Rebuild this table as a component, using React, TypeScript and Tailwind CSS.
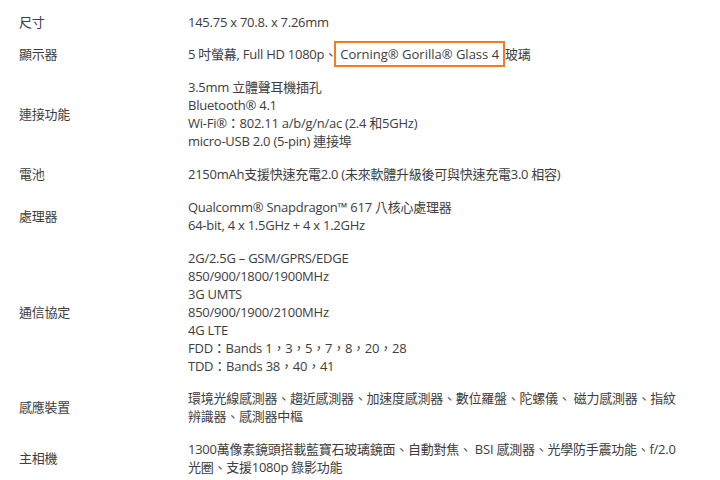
import React from "react";

const rows: { label: string; lines: React.ReactNode[] }[] = [
  { label: "尺寸", lines: ["145.75 x 70.8. x 7.26mm"] },
  {
    label: "顯示器",
    lines: [
      <>
        5 吋螢幕, Full HD 1080p<span className="inline-block w-[10px]">、</span>
        <span className="border-2 border-[#f47b20] px-[4px] py-[2px] tracking-normal">Corning® Gorilla® Glass 4</span>
        玻璃
      </>,
    ],
  },
  {
    label: "連接功能",
    lines: [
      "3.5mm 立體聲耳機插孔",
      "Bluetooth® 4.1",
      "Wi-Fi®：802.11 a/b/g/n/ac (2.4 和5GHz)",
      "micro-USB 2.0 (5-pin) 連接埠",
    ],
  },
  { label: "電池", lines: ["2150mAh支援快速充電2.0 (未來軟體升級後可與快速充電3.0 相容)"] },
  {
    label: "處理器",
    lines: ["Qualcomm® Snapdragon™ 617 八核心處理器", "64-bit, 4 x 1.5GHz + 4 x 1.2GHz"],
  },
  {
    label: "通信協定",
    lines: [
      "2G/2.5G – GSM/GPRS/EDGE",
      "850/900/1800/1900MHz",
      "3G UMTS",
      "850/900/1900/2100MHz",
      "4G LTE",
      "FDD：Bands 1，3，5，7，8，20，28",
      "TDD：Bands 38，40，41",
    ],
  },
  {
    label: "感應裝置",
    lines: [
      "環境光線感測器、趨近感測器、加速度感測器、數位羅盤、陀螺儀、 磁力感測器、指紋",
      "辨識器、感測器中樞",
    ],
  },
  {
    label: "主相機",
    lines: [
      "1300萬像素鏡頭搭載藍寶石玻璃鏡面、自動對焦、 BSI 感測器、光學防手震功能、f/2.0",
      "光圈、支援1080p 錄影功能",
    ],
  },
];

export default function App() {
  return (
    <div
      className="w-[720px] h-[480px] overflow-hidden bg-white pt-[5px] text-[13px] leading-[18px] tracking-[-0.25px] text-[#3d3d3d]"
      style={{ fontFamily: '"Open Sans", "Noto Sans CJK TC", sans-serif' }}
    >
      {rows.map((r, i) => (
        <div key={i} className="flex items-center pt-[7.6px] pb-[7.2px]">
          <div className="w-[188px] shrink-0 pl-[19px]">{r.label}</div>
          <div className="flex flex-col whitespace-nowrap">
            {r.lines.map((l, j) => (
              <div key={j} className="h-[18px]">{l}</div>
            ))}
          </div>
        </div>
      ))}
    </div>
  );
}
